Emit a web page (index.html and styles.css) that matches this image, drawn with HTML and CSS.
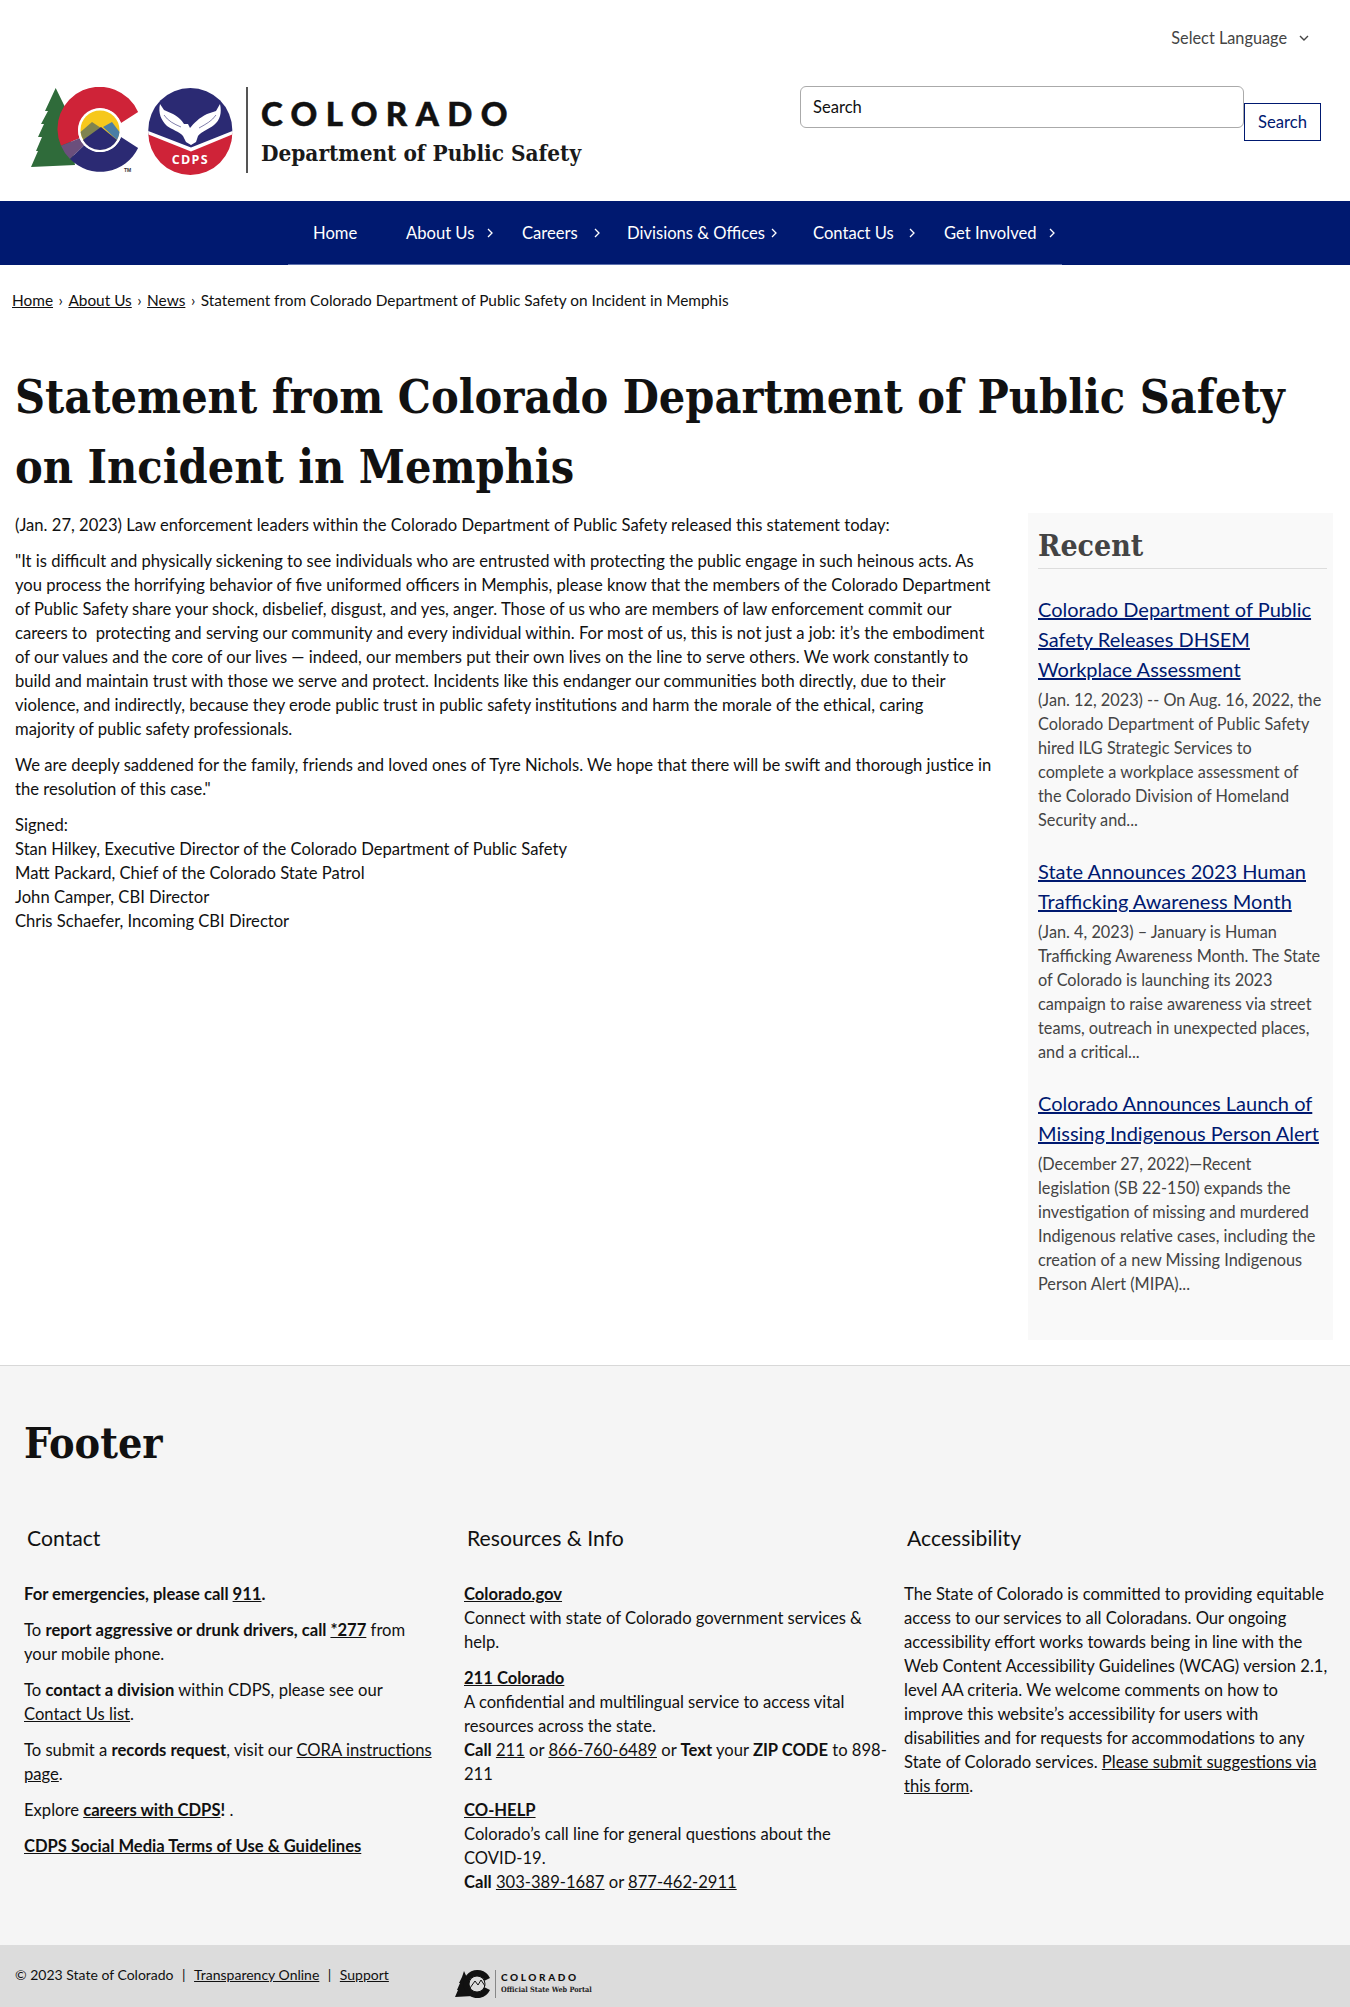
FILE: index.html
```html
<!DOCTYPE html>
<html lang="en">
<head>
<meta charset="utf-8">
<title>Statement from Colorado Department of Public Safety on Incident in Memphis</title>
<link rel="stylesheet" href="styles.css">
</head>
<body>
<header class="site-header">
  <div class="lang-row">
    <span class="lang">Select Language</span>
    <svg class="lang-chev" viewBox="0 0 10 6" width="10" height="6"><path d="M1 1l4 4 4-4" fill="none" stroke="#444" stroke-width="1.4"/></svg>
  </div>
  <div class="brand-row">
    <div class="logo">
      <svg class="logo-mark" viewBox="0 0 215 88" width="215" height="88">
        <path d="M24.700 1 L33 18 L36 26 L44 78 L0 80 L7 64 L5 64 L11 50 L7 50 L13 37 L10 37 L17 24 L14 24Z" fill="#2f6b3a"/>
        <path d="M107.100 25 A42 42 0 0 0 30 58.700 L48.600 51.200 A22 22 0 0 1 90 36Z" fill="#cf2338"/>
        <path d="M30 58.700 A42 42 0 0 0 39 72 L53.200 58.300 A22 22 0 0 1 48.600 51.200Z" fill="#6b4f7c"/>
        <path d="M39 72 A42 42 0 0 0 107.100 61 L90 50 A22 22 0 0 1 53.200 58.300Z" fill="#2b2a73"/>
        <circle cx="69" cy="43" r="22" fill="#fff"/>
        <circle cx="69" cy="43" r="19.500" fill="#f6c81c"/>
        <path d="M49.500 45 L61 35 L70 41 L54 55 A19.500 19.500 0 0 1 49.500 45Z" fill="#7f8350"/>
        <path d="M72 40 L81 35 L88.500 45 A19.500 19.500 0 0 1 86 53Z" fill="#4a7ea5"/>
        <path d="M52 53 L70 40 L86 53 A19.500 19.500 0 0 1 52 53Z" fill="#2b2a73"/>
        <text x="93" y="85" class="tm">TM</text>
        <circle cx="159.300" cy="43" r="42" fill="#2b2a73"/>
        <path d="M117.300 46 L160 63 L201.300 46 A42 42 0 0 1 117.300 46Z" fill="#cf2338"/>
        <path d="M117.200 44 L160 60.500 L201.400 44 L201.200 47.500 L160 64.500 L117.400 47.500Z" fill="#fff"/>
        <path d="M129 17 L133 23 L142 27 C148 30 151 34 153 37 L157 37 L159 41 C163 36 168 31 176 27 L185 24 L189 17 C191 26 189 33 183 38 C178 42 171 44 167 49 L165 55 L160 58 L155 55 L152 49 C148 44 141 43 136 39 C130 33 127 26 129 17Z" fill="#fff"/>
        <path d="M133 28 C137 34 143 37 150 40 M185 28 C181 34 175 37 168 41" fill="none" stroke="#2b2a73" stroke-width="0.6"/>
        <text x="159.300" y="77" text-anchor="middle" class="cdps">CDPS</text>
      </svg>
      <span class="logo-rule"></span>
      <div class="logo-words">
        <span class="logo-state">COLORADO</span>
        <span class="logo-dept">Department of Public Safety</span>
      </div>
    </div>
    <form class="search">
      <input class="search-input" type="text" placeholder="Search" aria-label="Search">
      <button class="search-btn" type="button">Search</button>
    </form>
  </div>
</header>

<nav class="main-nav">
  <ul class="nav-list">
    <li class="nav-item nav-home"><a href="#">Home</a></li>
    <li class="nav-item nav-about"><a href="#">About Us</a><svg class="nav-chev" viewBox="0 0 6 10" width="6" height="10"><path d="M1 1l4 4-4 4" fill="none" stroke="#fff" stroke-width="1.300"/></svg></li>
    <li class="nav-item nav-careers"><a href="#">Careers</a><svg class="nav-chev" viewBox="0 0 6 10" width="6" height="10"><path d="M1 1l4 4-4 4" fill="none" stroke="#fff" stroke-width="1.300"/></svg></li>
    <li class="nav-item nav-div"><a href="#">Divisions &amp; Offices</a><svg class="nav-chev" viewBox="0 0 6 10" width="6" height="10"><path d="M1 1l4 4-4 4" fill="none" stroke="#fff" stroke-width="1.300"/></svg></li>
    <li class="nav-item nav-contact"><a href="#">Contact Us</a><svg class="nav-chev" viewBox="0 0 6 10" width="6" height="10"><path d="M1 1l4 4-4 4" fill="none" stroke="#fff" stroke-width="1.300"/></svg></li>
    <li class="nav-item nav-get"><a href="#">Get Involved</a><svg class="nav-chev" viewBox="0 0 6 10" width="6" height="10"><path d="M1 1l4 4-4 4" fill="none" stroke="#fff" stroke-width="1.300"/></svg></li>
  </ul>
</nav>

<div class="crumbs"><a href="#">Home</a><i>›</i><a href="#">About Us</a><i>›</i><a href="#">News</a><i>›</i><span>Statement from Colorado Department of Public Safety on Incident in Memphis</span></div>

<main class="page">
  <h1 class="title">Statement from Colorado Department of Public Safety on Incident in Memphis</h1>
  <div class="columns">
    <article class="article">
      <p>(Jan. 27, 2023) Law enforcement leaders within the Colorado Department of Public Safety released this statement today:</p>
      <p>"It is difficult and physically sickening to see individuals who are entrusted with protecting the public engage in such heinous acts. As you process the horrifying behavior of five uniformed officers in Memphis, please know that the members of the Colorado Department of Public Safety share your shock, disbelief, disgust, and yes, anger. Those of us who are members of law enforcement commit our careers to&nbsp; protecting and serving our community and every individual within. For most of us, this is not just a job: it’s the embodiment of our values and the core of our lives — indeed, our members put their own lives on the line to serve others. We work constantly to build and maintain trust with those we serve and protect. Incidents like this endanger our communities both directly, due to their violence, and indirectly, because they erode public trust in public safety institutions and harm the morale of the ethical, caring majority&nbsp;of public safety professionals.</p>
      <p>We are deeply saddened for the family, friends and loved ones of Tyre Nichols. We hope that there will be swift and thorough justice in the resolution of this case."</p>
      <p>Signed:<br>Stan Hilkey, Executive Director of the Colorado Department of Public Safety<br>Matt Packard, Chief of the Colorado State Patrol<br>John Camper, CBI Director<br>Chris Schaefer, Incoming CBI Director</p>
    </article>
    <aside class="recent">
      <h2 class="recent-title">Recent</h2>
      <div class="recent-item">
        <a class="recent-link" href="#">Colorado Department of Public Safety Releases DHSEM Workplace Assessment</a>
        <p>(Jan. 12, 2023) -- On Aug. 16, 2022, the Colorado Department of Public Safety hired ILG Strategic Services to<br>complete a workplace assessment of<br>the Colorado Division of Homeland Security and...</p>
      </div>
      <div class="recent-item">
        <a class="recent-link" href="#">State Announces 2023 Human Trafficking Awareness Month</a>
        <p>(Jan. 4, 2023) – January is Human Trafficking Awareness Month. The State of Colorado is launching its 2023 campaign to raise awareness via street teams, outreach in unexpected places, and a critical...</p>
      </div>
      <div class="recent-item">
        <a class="recent-link" href="#">Colorado Announces Launch of Missing Indigenous Person Alert</a>
        <p>(December 27, 2022)—Recent<br>legislation (SB 22-150) expands the investigation of missing and murdered Indigenous relative cases, including the<br>creation of a new Missing Indigenous Person Alert (MIPA)...</p>
      </div>
    </aside>
  </div>
</main>

<footer class="footer">
  <h2 class="footer-title">Footer</h2>
  <div class="footer-cols">
    <section class="fcol">
      <h3>Contact</h3>
      <p><b>For emergencies, please call <a href="#">911</a>.</b></p>
      <p>To <b>report aggressive or drunk drivers, call <a href="#">*277</a></b> from your mobile phone.</p>
      <p>To <b>contact a division</b> within CDPS, please see our <a href="#">Contact Us list</a>.</p>
      <p>To submit a <b>records request</b>, visit our <a href="#">CORA instructions page</a>.</p>
      <p>Explore <b><a href="#">careers with CDPS</a>!</b> .</p>
      <p><b><a href="#">CDPS Social Media Terms of Use &amp; Guidelines</a></b></p>
    </section>
    <section class="fcol fcol-mid">
      <h3>Resources &amp; Info</h3>
      <p><b><a href="#">Colorado.gov</a></b><br>Connect with state of Colorado government services &amp; help.</p>
      <p><b><a href="#">211 Colorado</a></b><br>A confidential and multilingual service to access vital resources across the state.<br><b>Call</b> <a href="#">211</a> or <a href="#">866-760-6489</a> or <b>Text</b> your <b>ZIP CODE</b> to 898-211</p>
      <p><b><a href="#">CO-HELP</a></b><br>Colorado’s call line for general questions about the<br>COVID-19.<br><b>Call</b> <a href="#">303-389-1687</a> or <a href="#">877-462-2911</a></p>
    </section>
    <section class="fcol fcol-last">
      <h3>Accessibility</h3>
      <p>The State of Colorado is committed to providing equitable access to our services to all Coloradans. Our ongoing accessibility effort works towards being in line with the Web&nbsp;Content Accessibility Guidelines (WCAG) version 2.1, level AA criteria. We welcome comments on how to improve this website’s accessibility for users with disabilities and for requests for accommodations to any State of Colorado services. <a href="#">Please submit suggestions via this form</a>.</p>
    </section>
  </div>
</footer>

<div class="legal">
  <div class="legal-text">© 2023 State of Colorado<i>|</i><a href="#">Transparency Online</a><i>|</i><a href="#">Support</a></div>
  <div class="portal">
    <svg viewBox="0 0 36 28" width="36" height="28">
      <path d="M9 1 L13 10 L15 20 L18 26 L0 27 L3 20 L2 20 L5 13 L4 13 L7 7Z" fill="#111"/>
      <path d="M35 8 A14 14 0 1 0 35 20 L29 17 A7.500 7.500 0 1 1 29 11Z" fill="#111"/>
      <circle cx="22" cy="14" r="8" fill="#dcdcdc" stroke="#111" stroke-width="1"/>
      <path d="M15 18 L20 11 L23 15 L26 10 L30 16" fill="none" stroke="#111" stroke-width="1"/>
    </svg>
    <span class="portal-rule"></span>
    <div class="portal-words">
      <span class="portal-state">COLORADO</span>
      <span class="portal-sub">Official State Web Portal</span>
    </div>
  </div>
</div>
</body>
</html>
```

FILE: styles.css
```css
* { box-sizing: border-box; }
html, body { margin: 0; padding: 0; }
body {
  font-family: "Lato", "Open Sans", sans-serif;
  font-size: 16.6px;
  line-height: 24px;
  color: #111;
  background: #fff;
}
a { color: inherit; text-decoration: underline; }
p { margin: 0; }

.site-header { height: 201px; padding-top: 26px; }
.lang-row {
  display: flex;
  justify-content: flex-end;
  align-items: center;
  gap: 12px;
  height: 24px;
  padding-right: 41px;
  color: #444;
  font-size: 16.3px;
}
.brand-row {
  display: flex;
  justify-content: space-between;
  padding: 37px 29px 0 31px;
}
.logo { display: flex; align-items: stretch; height: 88px; }
.logo-mark { display: block; }
.tm { font: 700 5px "Liberation Sans", sans-serif; fill: #333; }
.cdps { font: 700 12.5px "Open Sans", sans-serif; fill: #fff; letter-spacing: 1.3px; }
.logo-rule { width: 2px; height: 86px; background: #555; }
.logo-words { display: flex; flex-direction: column; margin-left: 13px; }
.logo-state {
  font: 900 33px/38px "Lato", sans-serif;
  letter-spacing: 8.4px;
  color: #111;
  margin-top: 7px;
  -webkit-text-stroke: 0.5px #111;
}
.logo-dept {
  font: 700 22.4px/30px "DejaVu Serif Condensed", "DejaVu Serif", serif;
  color: #1a1a1a;
  margin-top: 6px;
}
.search { display: flex; align-items: flex-start; margin-top: -1px; }
.search-input {
  width: 444px;
  height: 42px;
  border: 1px solid #aaa;
  border-radius: 6px;
  padding: 0 12px;
  font: 16.6px "Lato", sans-serif;
  background: #fff;
}
.search-input::placeholder { color: #111; opacity: 1; }
.search-btn {
  width: 77px;
  height: 38px;
  margin-top: 17px;
  background: #fff;
  border: 1px solid #001970;
  border-radius: 0;
  font: 16.6px "Lato", sans-serif;
  color: #001970;
  padding: 0;
}

.main-nav { height: 64px; background: #001970; }
.nav-list {
  list-style: none;
  margin: 0 auto;
  padding: 0;
  width: 774px;
  height: 64px;
  display: flex;
  border-bottom: 1px solid #5d70ad;
  color: #fff;
}
.nav-item { display: flex; align-items: center; height: 63px; justify-content: space-between; }
.nav-item a { text-decoration: none; }
.nav-home { margin-left: 25px; width: 93px; }
.nav-about { width: 87px; }
.nav-careers { margin-left: 29px; width: 78px; }
.nav-div { margin-left: 27px; width: 150px; }
.nav-contact { margin-left: 36px; width: 102px; }
.nav-get { margin-left: 29px; width: 111px; }

.crumbs { padding: 23px 12px 0; height: 59px; font-size: 15.4px; }
.crumbs i { font-style: normal; margin: 0 5.5px; }

.page { padding: 38px 15px 25px; }
.title {
  margin: 0;
  font: 700 46.3px/70px "DejaVu Serif Condensed", "DejaVu Serif", serif;
  color: #111;
}
.columns { display: flex; justify-content: space-between; margin-top: 11px; }
.article { width: 985px; }
.article p { margin-bottom: 12px; }
.recent {
  width: 305px;
  margin-right: 2px;
  background: #f9f9f9;
  padding: 12px 6px 0 10px;
  height: 827px;
  color: #444;
}
.recent-title {
  margin: 0 0 25px;
  font: 700 30px/42px "DejaVu Serif Condensed", "DejaVu Serif", serif;
  color: #444;
  border-bottom: 1px solid #ddd;
  padding-bottom: 1px;
}
.recent-item { margin-bottom: 24px; }
.recent-item p { font-size: 16.3px; }
.recent-link { display: block; font-size: 20px; line-height: 30px; color: #001970; margin-bottom: 4px; }

.footer {
  background: #f5f5f5;
  border-top: 1px solid #d8d8d8;
  height: 580px;
  padding: 49px 24px 0;
}
.footer-title {
  margin: 0;
  font: 700 42.7px/56px "DejaVu Serif Condensed", "DejaVu Serif", serif;
  color: #111;
}
.footer-cols { display: grid; grid-template-columns: 440px 440px 428px; margin-top: 52px; }
.fcol { padding-right: 24px; }
.fcol-mid { padding-right: 8px; }
.fcol-last { padding-right: 0; }
.fcol h3 {
  margin: 0 0 29px 3px;
  font: 400 21.2px/30px "Lato", sans-serif;
}
.fcol p { margin-bottom: 12px; }
.fcol a { color: #111; }

.legal {
  height: 62px;
  background: #dcdcdc;
  display: flex;
  padding: 18px 0 0 15px;
  font-size: 14px;
}
.legal-text { width: 440px; }
.legal-text i { font-style: normal; margin: 0 8.5px; }
.portal { display: flex; align-items: flex-start; margin-top: 7px; height: 30px; }
.portal-rule { width: 1px; height: 28px; background: #888; margin: 0 5px 0 4px; }
.portal-words { display: flex; flex-direction: column; }
.portal-state { font: 900 10px/14px "Lato", sans-serif; letter-spacing: 2.6px; color: #111; }
.portal-sub { font: 700 7.3px/12px "DejaVu Serif Condensed", serif; color: #222; }
```
